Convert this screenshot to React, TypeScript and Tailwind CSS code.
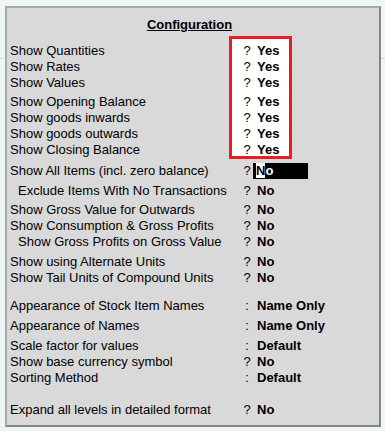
const rows = [
  { label: "Show Quantities", sym: "?", value: "Yes", mt: "mt-[10px]" },
  { label: "Show Rates", sym: "?", value: "Yes", mt: "" },
  { label: "Show Values", sym: "?", value: "Yes", mt: "" },
  { label: "Show Opening Balance", sym: "?", value: "Yes", mt: "mt-[3px]" },
  { label: "Show goods inwards", sym: "?", value: "Yes", mt: "" },
  { label: "Show goods outwards", sym: "?", value: "Yes", mt: "" },
  { label: "Show Closing Balance", sym: "?", value: "Yes", mt: "" },
  { label: "Show All Items (incl. zero balance)", sym: "?", value: "No", mt: "mt-[5px]", active: true },
  { label: "Exclude Items With No Transactions", sym: "?", value: "No", mt: "mt-[4px]", indent: true },
  { label: "Show Gross Value for Outwards", sym: "?", value: "No", mt: "mt-[3px]" },
  { label: "Show Consumption & Gross Profits", sym: "?", value: "No", mt: "" },
  { label: "Show Gross Profits on Gross Value", sym: "?", value: "No", mt: "", indent: true },
  { label: "Show using Alternate Units", sym: "?", value: "No", mt: "mt-[4px]" },
  { label: "Show Tail Units of Compound Units", sym: "?", value: "No", mt: "" },
  { label: "Appearance of Stock Item Names", sym: ":", value: "Name Only", mt: "mt-[12px]" },
  { label: "Appearance of Names", sym: ":", value: "Name Only", mt: "mt-[4px]" },
  { label: "Scale factor for values", sym: ":", value: "Default", mt: "mt-[4px]" },
  { label: "Show base currency symbol", sym: "?", value: "No", mt: "" },
  { label: "Sorting Method", sym: ":", value: "Default", mt: "" },
  { label: "Expand all levels in detailed format", sym: "?", value: "No", mt: "mt-[16px]" },
];

export default function App() {
  return (
    <div
      className="relative w-full h-[431px] bg-[#eef6f4] pt-[6px] pl-[5px] text-black text-[13px] leading-4"
      style={{ fontFamily: '"Liberation Sans", Arial, sans-serif' }}
    >
      <div className="absolute left-0 right-0 top-[58px] h-px bg-[#d3dbd8]" />
      <div className="relative w-[376px] h-[421px] bg-[#d9d9d9] border-2 border-[#848484] border-l-[#a9a9a9] border-t-[#a9a9a9]">
        {/* red highlight box */}
        <div className="absolute left-[222px] top-[28px] w-[63px] h-[123px] border-[3px] border-[#ec1c24] bg-white" />

        <div className="relative pt-[9px] pr-[7px] text-center font-bold">
          <span className="underline">Configuration</span>
        </div>

        <div className="relative flex flex-col">
          {rows.map((r) => (
            <div key={r.label} className={`flex h-4 items-start ${r.mt}`}>
              <div className={`w-[236px] shrink-0 whitespace-nowrap ${r.indent ? "pl-[11px]" : "pl-[3px]"}`}>
                {r.label}
              </div>
              <div className="w-2 shrink-0 text-center">{r.sym}</div>
              {r.active ? (
                <div className="ml-[2px] w-[55px] h-4 bg-black pl-[3px] font-bold whitespace-nowrap">
                  <span className="bg-white text-black">N</span>
                  <span className="text-white">o</span>
                </div>
              ) : (
                <div className="ml-[6px] font-bold whitespace-nowrap">{r.value}</div>
              )}
            </div>
          ))}
        </div>
      </div>
    </div>
  );
}
